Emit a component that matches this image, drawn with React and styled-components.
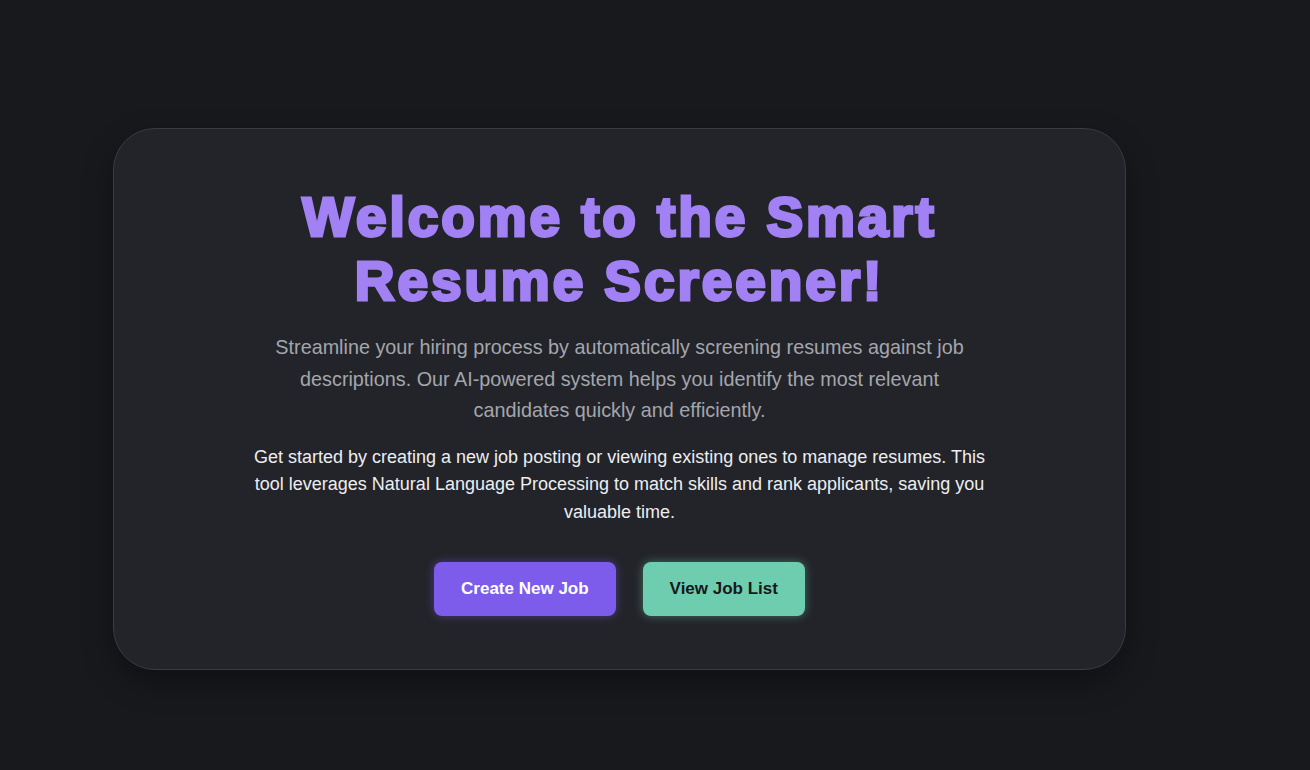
import React from 'react'
import styled, { createGlobalStyle } from 'styled-components';

const GlobalStyle = createGlobalStyle`
  html, body {
    margin: 0;
    padding: 0;
    background: #18191d;
    font-family: "Liberation Sans", Arial, sans-serif;
  }
`;

function App() {
  return (
    <Page>
      <GlobalStyle />
      <Card>
        <Title>Welcome to the Smart Resume Screener!</Title>
        <Lead>
          Streamline your hiring process by automatically screening resumes against job
          descriptions. Our AI-powered system helps you identify the most relevant
          candidates quickly and efficiently.
        </Lead>
        <Body>
          Get started by creating a new job posting or viewing existing ones to manage resumes. This
          tool leverages Natural Language Processing to match skills and rank applicants, saving you
          valuable time.
        </Body>
        <Actions>
          <Button variant="primary">Create New Job</Button>
          <Button variant="secondary">View Job List</Button>
        </Actions>
      </Card>
    </Page>
  )
}

const Page = styled.div`
  min-height: 770px;
  box-sizing: border-box;
  padding: 128px 0 0 113px;
`;

const Card = styled.div`
  box-sizing: border-box;
  width: 1013px;
  height: 542px;
  background: #232429;
  border: 1px solid #3a3b41;
  border-radius: 42px;
  box-shadow: 0 12px 30px rgba(0, 0, 0, 0.35);
  display: flex;
  flex-direction: column;
  align-items: center;
  padding-top: 56px;
`;

const Title = styled.h1`
  margin: 0;
  width: 720px;
  text-align: center;
  color: #a281f4;
  font-family: "Liberation Sans", Arial, sans-serif;
  font-weight: 900;
  font-size: 55px;
  line-height: 64px;
  -webkit-text-stroke: 3px #a281f4;
  paint-order: stroke fill;
  letter-spacing: 2.9px;
`;

const Lead = styled.p`
  margin: 19px 0 0;
  width: 710px;
  text-align: center;
  color: #a3a6ad;
  font-size: 19.8px;
  line-height: 31.5px;
`;

const Body = styled.p`
  margin: 17px 0 0;
  width: 740px;
  text-align: center;
  color: #eceef1;
  font-size: 18px;
  line-height: 27.5px;
`;

const Actions = styled.div`
  display: flex;
  gap: 27px;
  margin-top: 36px;
`;

const Button = styled.button`
  height: 54px;
  padding: 0 27px;
  border: none;
  border-radius: 8px;
  font-family: "Liberation Sans", Arial, sans-serif;
  font-weight: 700;
  font-size: 17px;
  cursor: pointer;
  background: ${props => props.variant === 'primary' ? '#7d5cec' : '#6fcdaf'};
  color: ${props => props.variant === 'primary' ? '#ffffff' : '#17181b'};
  box-shadow: ${props => props.variant === 'primary'
    ? '0 0 10px rgba(125, 92, 236, 0.45)'
    : '0 0 10px rgba(111, 205, 175, 0.45)'};
`;

export default App
